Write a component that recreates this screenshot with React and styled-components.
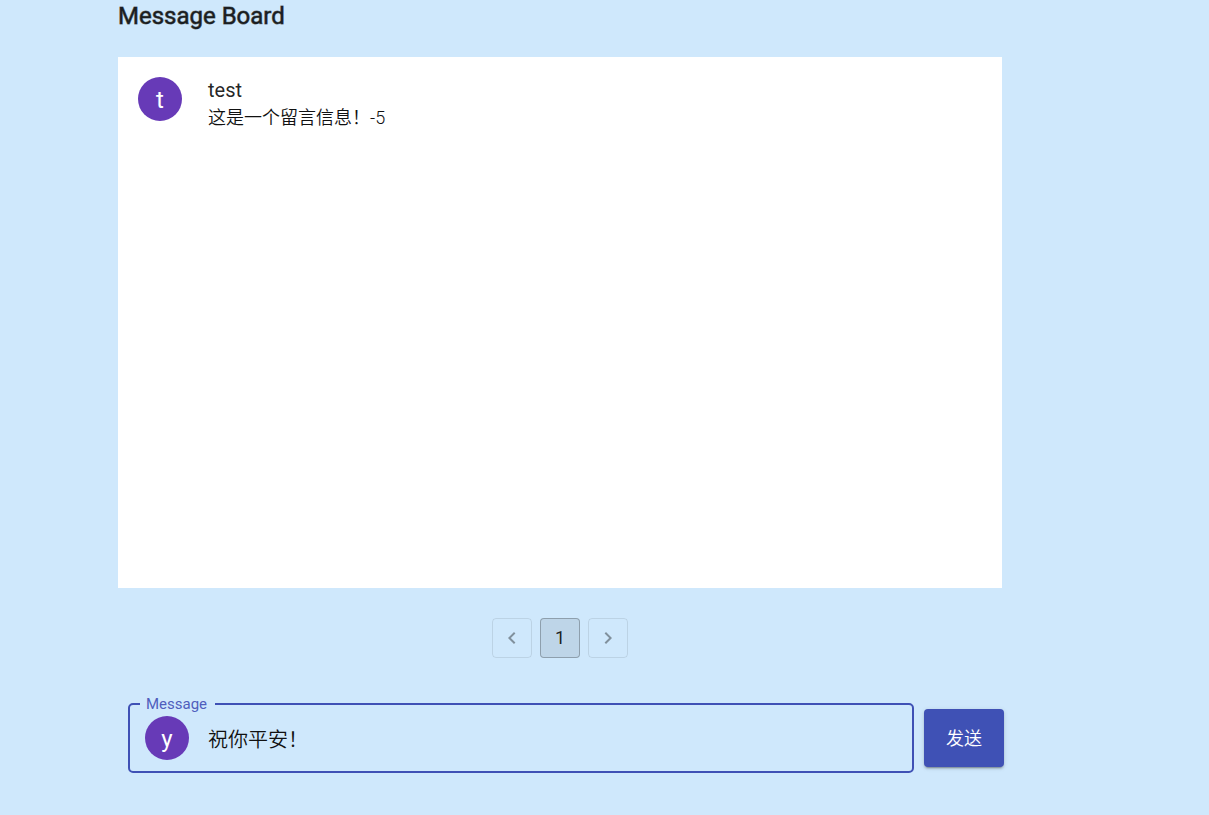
import React, { useState } from "react";
import styled, { createGlobalStyle } from "styled-components";

const GlobalStyle = createGlobalStyle`
  *, *::before, *::after { box-sizing: border-box; }
  body {
    margin: 0;
    background: #cfe8fc;
    color: rgba(0, 0, 0, 0.87);
    font-family: Roboto, "Noto Sans CJK SC", sans-serif;
  }
  button, input { font: inherit; color: inherit; }
`;

const Page = styled.main`
  display: flex;
  flex-direction: column;
  min-height: 100vh;
  padding: 0 205px 40px 118px;
`;

const Title = styled.h1`
  margin: 0;
  font-size: 24px;
  line-height: 32px;
  font-weight: 400;
  -webkit-text-stroke: 1px rgba(27, 30, 33, 0.6);
  color: #1b1e21;
`;

const Board = styled.ul`
  list-style: none;
  margin: 25px 2px 0 0;
  padding: 20px;
  min-height: 531px;
  background: #fff;
`;

const MessageRow = styled.li`
  display: flex;
  gap: 26px;
`;

const Avatar = styled.span`
  display: flex;
  flex: none;
  align-items: center;
  justify-content: center;
  width: 44px;
  height: 44px;
  border-radius: 50%;
  background: #673ab7;
  color: #fff;
  font-size: 24px;
  line-height: 44px;
  padding-top: 2px;
`;

const Author = styled.div`
  font-size: 20px;
  line-height: 26px;
`;

const MessageText = styled.p`
  margin: 0;
  color: #111;
  font-size: 18px;
  line-height: 30px;
  font-weight: 350;
`;

const Pagination = styled.nav`
  display: flex;
  justify-content: center;
  gap: 8px;
  margin: 30px 2px 0 0;
`;

const PageButton = styled.button`
  display: flex;
  align-items: center;
  justify-content: center;
  width: 40px;
  height: 40px;
  padding: 0;
  border: 1px solid ${(p) => (p.$selected ? "rgba(0, 0, 0, 0.26)" : "rgba(0, 0, 0, 0.09)")};
  border-radius: 4px;
  background: ${(p) => (p.$selected ? "rgba(0, 0, 0, 0.08)" : "transparent")};
  color: ${(p) => (p.disabled ? "rgba(0, 0, 0, 0.38)" : "inherit")};
  font-size: 18px;
  line-height: 36px;
`;

const Composer = styled.form`
  display: flex;
  align-items: center;
  gap: 10px;
  margin: 37px 0 0 10px;
`;

const Field = styled.fieldset`
  display: flex;
  align-items: center;
  gap: 18px;
  flex: 1;
  min-width: 0;
  margin: 0;
  padding: 3px 15px 11px;
  border: 2px solid #3f51b5;
  border-radius: 5px;
`;

const Legend = styled.legend`
  margin-left: -5px;
  padding: 0 8px 0 6px;
  color: #4f5ebd;
  font-size: 15px;
  line-height: 18px;
`;

const TextInput = styled.input`
  flex: 1;
  min-width: 0;
  padding: 4px 0 0 1px;
  border: 0;
  outline: 0;
  background: transparent;
  color: #111;
  font-size: 20px;
  line-height: 30px;
  font-weight: 350;
`;

const SendButton = styled.button`
  width: 80px;
  height: 58px;
  margin-top: 7px;
  padding: 0 0 2px;
  border: 0;
  border-radius: 4px;
  background: #3f51b5;
  color: #fff;
  font-size: 18px;
  font-weight: 350;
  box-shadow: 0 3px 1px -2px rgba(0, 0, 0, 0.2), 0 2px 2px 0 rgba(0, 0, 0, 0.14),
    0 1px 5px 0 rgba(0, 0, 0, 0.12);
`;

function Chevron({ d }) {
  return (
    <svg width="24" height="24" viewBox="0 0 24 24" fill="currentColor" aria-hidden="true">
      <path d={d} />
    </svg>
  );
}

const messages = [{ id: 5, author: "test", text: "这是一个留言信息！-5" }];

export default function App() {
  const [draft, setDraft] = useState("祝你平安！");
  return (
    <>
      <GlobalStyle />
      <Page>
        <Title>Message Board</Title>
        <Board>
          {messages.map((m) => (
            <MessageRow key={m.id}>
              <Avatar>{m.author[0]}</Avatar>
              <div>
                <Author>{m.author}</Author>
                <MessageText>{m.text}</MessageText>
              </div>
            </MessageRow>
          ))}
        </Board>
        <Pagination aria-label="Pages">
          <PageButton type="button" disabled aria-label="Previous page">
            <Chevron d="M15.41 7.41L14 6l-6 6 6 6 1.41-1.41L10.83 12z" />
          </PageButton>
          <PageButton type="button" $selected aria-current="page">1</PageButton>
          <PageButton type="button" disabled aria-label="Next page">
            <Chevron d="M10 6L8.59 7.41 13.17 12l-4.58 4.59L10 18l6-6z" />
          </PageButton>
        </Pagination>
        <Composer onSubmit={(e) => e.preventDefault()}>
          <Field>
            <Legend><label htmlFor="message">Message</label></Legend>
            <Avatar>y</Avatar>
            <TextInput id="message" value={draft} onChange={(e) => setDraft(e.target.value)} />
          </Field>
          <SendButton type="submit">发送</SendButton>
        </Composer>
      </Page>
    </>
  );
}
